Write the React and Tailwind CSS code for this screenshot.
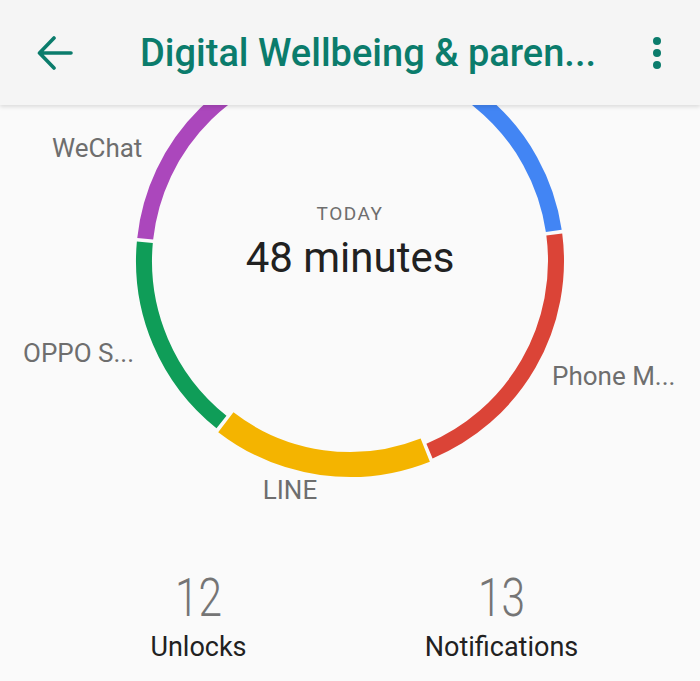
import React from "react";

const CX = 350;
const CY = 261;

const segments = [
  { color: "#4285f4", from: 266, to: 351.6, r: 206, w: 16 },
  { color: "#db4437", from: -7.4, to: 67.3, r: 206, w: 16 },
  { color: "#f4b400", from: 68.3, to: 127.6, r: 203.5, w: 25 },
  { color: "#0f9d58", from: 128.6, to: 185.2, r: 206, w: 16 },
  { color: "#ab47bc", from: 186.2, to: 265, r: 206, w: 16 },
];

const point = (deg, r) => {
  const a = (deg * Math.PI) / 180;
  return [CX + r * Math.cos(a), CY + r * Math.sin(a)];
};

const arc = (from, to, r) => {
  const [x1, y1] = point(from, r);
  const [x2, y2] = point(to, r);
  const large = to - from > 180 ? 1 : 0;
  return `M ${x1} ${y1} A ${r} ${r} 0 ${large} 1 ${x2} ${y2}`;
};

const labels = [
  { text: "WeChat", x: 52, y: 157, anchor: "start" },
  { text: "OPPO S...", x: 23, y: 362, anchor: "start" },
  { text: "Phone M...", x: 552, y: 385, anchor: "start" },
  { text: "LINE", x: 290, y: 499, anchor: "middle" },
];

function Header() {
  return (
    <div className="relative z-10 flex h-[105px] items-center bg-[#f5f5f5] shadow-[0_2px_4px_rgba(0,0,0,0.12)]">
      <svg width="36" height="36" viewBox="0 0 36 36" className="ml-[37px] shrink-0">
        <path
          d="M34 18 H3 M17 3 L2.5 18 L17 33"
          fill="none"
          stroke="#0b7c6c"
          strokeWidth="3.6"
          strokeLinecap="round"
          strokeLinejoin="round"
        />
      </svg>
      <div className="ml-[67px] flex-1 text-[38px] font-medium leading-none text-[#0b7c6c]">
        Digital Wellbeing &amp; paren...
      </div>
      <div className="mr-[39px] flex flex-col items-center gap-[4px]">
        <span className="h-2 w-2 rounded-full bg-[#0b7c6c]" />
        <span className="h-2 w-2 rounded-full bg-[#0b7c6c]" />
        <span className="h-2 w-2 rounded-full bg-[#0b7c6c]" />
      </div>
    </div>
  );
}

function Chart() {
  return (
    <svg width="700" height="415" viewBox="0 105 700 415" className="block">
      {segments.map((s, i) => (
        <path key={i} d={arc(s.from, s.to, s.r)} fill="none" stroke={s.color} strokeWidth={s.w} />
      ))}
      {labels.map((l) => (
        <text
          key={l.text}
          x={l.x}
          y={l.y}
          textAnchor={l.anchor}
          fill="#6e6e6e"
          fontSize="26"
          fontFamily="Roboto, sans-serif"
        >
          {l.text}
        </text>
      ))}
      <text
        x={CX}
        y={220}
        textAnchor="middle"
        fill="#6e6e6e"
        fontSize="19"
        letterSpacing="1.5"
        fontFamily="Roboto, sans-serif"
      >
        TODAY
      </text>
      <text x={CX} y={272} textAnchor="middle" fill="#212121" fontSize="42" fontFamily="Roboto, sans-serif">
        48 minutes
      </text>
    </svg>
  );
}

function Stat({ value, label }) {
  return (
    <div className="flex w-[303px] flex-col items-center">
      <div className="scale-x-[0.8] text-[53px] font-light leading-none text-[#757575]">{value}</div>
      <div className="mt-[9px] text-[27px] leading-none text-[#212121]">{label}</div>
    </div>
  );
}

export default function App() {
  return (
    <div className="h-[681px] w-[700px] overflow-hidden bg-[#fafafa] font-['Roboto',sans-serif]">
      <Header />
      <Chart />
      <div className="mt-[52px] flex justify-center">
        <Stat value="12" label="Unlocks" />
        <Stat value="13" label="Notifications" />
      </div>
    </div>
  );
}
